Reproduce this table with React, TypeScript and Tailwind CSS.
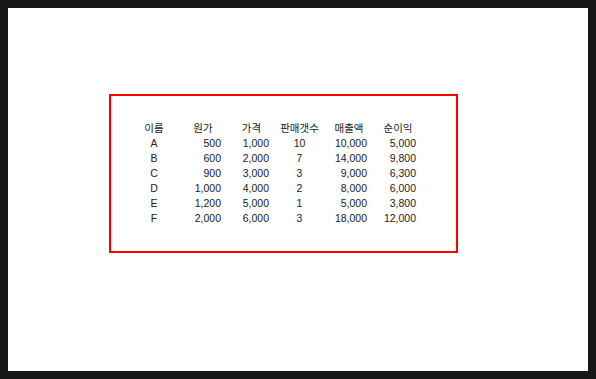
const headers = ["이름", "원가", "가격", "판매갯수", "매출액", "순이익"];

const rows: [string, string, string, string, string, string][] = [
  ["A", "500", "1,000", "10", "10,000", "5,000"],
  ["B", "600", "2,000", "7", "14,000", "9,800"],
  ["C", "900", "3,000", "3", "9,000", "6,300"],
  ["D", "1,000", "4,000", "2", "8,000", "6,000"],
  ["E", "1,200", "5,000", "1", "5,000", "3,800"],
  ["F", "2,000", "6,000", "3", "18,000", "12,000"],
];

// per-column width and alignment for the body cells
const cols = [
  "w-[48px] text-center",
  "w-[50px] text-right pr-[7px]",
  "w-[47px] text-right pr-[6px]",
  "w-[49px] text-center",
  "w-[50px] text-right pr-[7px]",
  "w-[48px] text-right pr-[6px]",
];

const headCols = [
  "w-[48px]",
  "w-[50px]",
  "w-[47px]",
  "w-[49px]",
  "w-[50px]",
  "w-[48px]",
];

export default function App() {
  return (
    <div className="h-[379px] w-[596px] bg-[#161616] p-2">
      <div className="h-full w-full bg-white pl-[101px] pt-[86px]">
        <div
          className="h-[159px] w-[349px] border-2 border-[#ff0000] pl-[19px] pt-[25px] text-[10.5px] leading-[15px] text-[#222]"
          style={{ fontFamily: '"Liberation Sans", "Noto Sans CJK KR", sans-serif' }}
        >
          <div className="flex">
            {headers.map((h, i) => (
              <div key={h} className={`${headCols[i]} text-center`}>
                {h}
              </div>
            ))}
          </div>
          {rows.map((r) => (
            <div key={r[0]} className="flex">
              {r.map((v, i) => (
                <div key={i} className={cols[i]}>
                  {v}
                </div>
              ))}
            </div>
          ))}
        </div>
      </div>
    </div>
  );
}
